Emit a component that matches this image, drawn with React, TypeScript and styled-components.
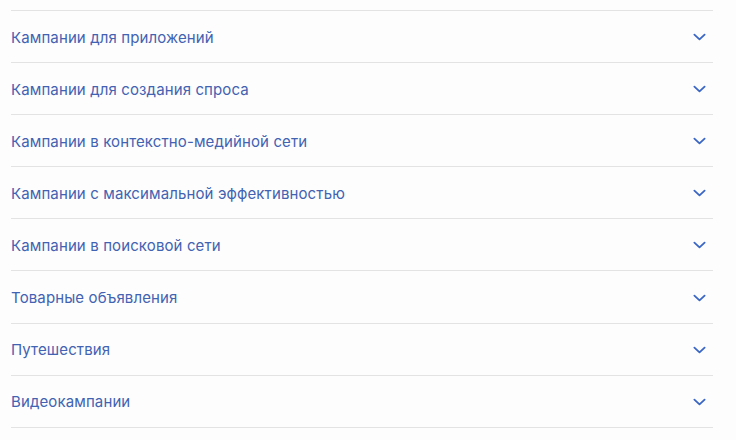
import styled, { createGlobalStyle } from 'styled-components';

const GlobalStyle = createGlobalStyle`
  body {
    margin: 0;
    background: #fdfdfd;
    font-family: Inter, "Noto Sans", sans-serif;
  }
`;

const sections = [
  'Кампании для приложений',
  'Кампании для создания спроса',
  'Кампании в контекстно-медийной сети',
  'Кампании с максимальной эффективностью',
  'Кампании в поисковой сети',
  'Товарные объявления',
  'Путешествия',
  'Видеокампании',
];

export default function App() {
  return (
    <>
      <GlobalStyle />
      <List>
        {sections.map((title) => (
          <Row key={title}>
            <Title>{title}</Title>
            <Chevron viewBox="0 0 14 8" aria-hidden>
              <path d="M1.5 1.5 L7 6.5 L12.5 1.5" />
            </Chevron>
          </Row>
        ))}
      </List>
    </>
  );
}

const List = styled.div`
  margin: 10px 23px 0 11px;
  border-top: 1px solid #e3e3e3;
`;

const Row = styled.div`
  display: flex;
  align-items: center;
  justify-content: space-between;
  height: 52.1px;
  box-sizing: border-box;
  border-bottom: 1px solid #e3e3e3;
  padding: 1px 7px 0 0;
  cursor: pointer;
`;

const Title = styled.span`
  font-size: 15px;
  color: #4262b2;
  letter-spacing: 0.12px;
`;

const Chevron = styled.svg`
  width: 13px;
  height: 8px;
  fill: none;
  stroke: #3b66c4;
  stroke-width: 2;
  stroke-linecap: round;
  stroke-linejoin: round;
`;
